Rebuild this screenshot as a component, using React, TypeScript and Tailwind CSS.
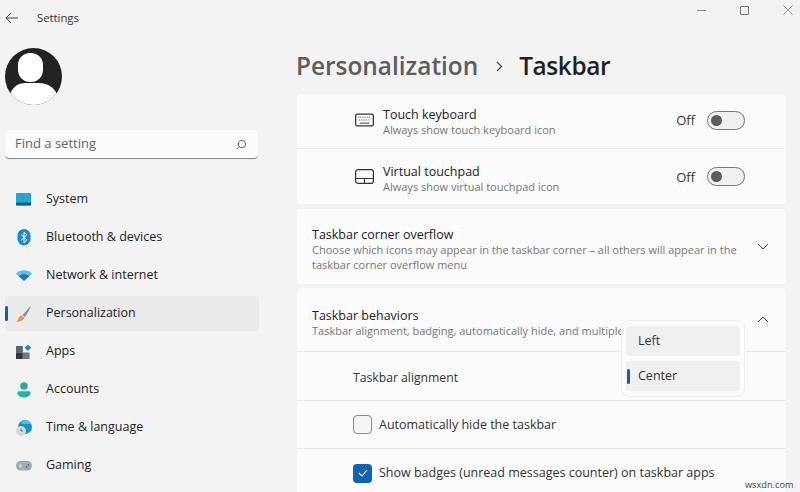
import { Search } from 'lucide-react';

const font = { fontFamily: '"Open Sans", "Noto Sans", sans-serif' };

function SystemIcon() {
  return (
    <svg width="15" height="13" viewBox="0 0 16 13" preserveAspectRatio="none">
      <rect width="16" height="12.5" rx="1" fill="#2aa5cf" />
      <rect y="9.5" width="16" height="3" rx="0.8" fill="#0b5f8a" />
    </svg>
  );
}

function BluetoothIcon() {
  return (
    <svg width="14" height="17" viewBox="0 0 14 17">
      <rect width="13" height="16.5" x="0.5" rx="6.5" fill="#1a86d9" />
      <path d="M4 5.5l6 5.5-3 2.8V3.2l3 2.8-6 5.5" fill="none" stroke="#fff" strokeWidth="1" />
    </svg>
  );
}

function WifiIcon() {
  return (
    <svg width="16" height="11" viewBox="0 0 16 11">
      <path d="M0 3.6C4.5-.8 11.5-.8 16 3.6L13.6 6C10.4 3.2 5.6 3.2 2.4 6z" fill="#5cc1ea" />
      <path d="M2.4 6C5.6 3.2 10.4 3.2 13.6 6L8 11z" fill="#0f7cc4" />
    </svg>
  );
}

function BrushIcon() {
  return (
    <svg width="15" height="16" viewBox="0 0 15 16">
      <path d="M14.5.2L6.5 9l2.4 2.2C11 8 13.4 4.2 14.8.5z" fill="#8a8f96" />
      <path d="M5.8 9.4l2.5 2.3C7.4 14.4 3.4 16 .3 15.7c2-1.1 1.8-2.6 2.5-4 .6-1.1 1.8-1.9 3-2.3z" fill="#e8933a" />
    </svg>
  );
}

function AppsIcon() {
  return (
    <svg width="15" height="14" viewBox="0 0 15 14">
      <rect x="0" y="1" width="6.8" height="6.5" fill="#5d6670" />
      <rect x="0" y="7.5" width="6.8" height="6.5" fill="#2f343a" />
      <rect x="7" y="7.5" width="6.5" height="6.5" fill="#6f7780" />
      <rect x="9.6" y="0.4" width="4.6" height="4.6" transform="rotate(45 11.9 2.7)" fill="#1a86d9" />
    </svg>
  );
}

function AccountsIcon() {
  return (
    <svg width="14" height="16" viewBox="0 0 14 16">
      <circle cx="7" cy="4" r="3.8" fill="#2aa89a" />
      <path d="M0.4 10.8c0-1 .8-1.6 1.8-1.6h9.6c1 0 1.8.6 1.8 1.6 0 3-3 4.7-6.6 4.7S.4 13.8.4 10.8z" fill="#22b5a4" />
    </svg>
  );
}

function TimeIcon() {
  return (
    <svg width="16" height="16" viewBox="0 0 16 16">
      <circle cx="9" cy="7" r="7" fill="#1c8fc9" />
      <path d="M9 0a7 7 0 0 1 6.5 4.4C12 3.5 9.5 4.5 6.5 4 5 3.7 4.3 2.6 4.6 1.6A7 7 0 0 1 9 0z" fill="#48c0e6" />
      <circle cx="5" cy="11" r="5" fill="#d5dade" />
      <path d="M5 8.6V11h2" fill="none" stroke="#555" strokeWidth="0.8" />
    </svg>
  );
}

function GamingIcon() {
  return (
    <svg width="16" height="10" viewBox="0 0 16 10">
      <rect width="16" height="9.5" rx="4.5" fill="#a4abb3" />
      <path d="M3 4.8h3M4.5 3.3v3" stroke="#fff" strokeWidth="0.9" />
      <circle cx="10.5" cy="6" r="0.9" fill="#2a6fb5" />
      <circle cx="12.4" cy="3.8" r="0.9" fill="#2a6fb5" />
    </svg>
  );
}

const navItems = [
  { label: 'System', icon: <SystemIcon /> },
  { label: 'Bluetooth & devices', icon: <BluetoothIcon /> },
  { label: 'Network & internet', icon: <WifiIcon /> },
  { label: 'Personalization', icon: <BrushIcon />, active: true },
  { label: 'Apps', icon: <AppsIcon /> },
  { label: 'Accounts', icon: <AccountsIcon /> },
  { label: 'Time & language', icon: <TimeIcon /> },
  { label: 'Gaming', icon: <GamingIcon /> },
];

function Toggle({ className = '' }: { className?: string }) {
  return (
    <div className={`flex items-center gap-[12px] ${className}`}>
      <span className="pt-[2px] text-[13px] text-[#333]">Off</span>
      <div className="flex h-[19px] w-[38px] items-center rounded-full border border-[#777] bg-[#f0f0f0] pl-[3px]">
        <div className="h-[11px] w-[11px] rounded-full bg-[#5c5c5c]" />
      </div>
    </div>
  );
}

function KeyboardIcon() {
  return (
    <svg width="19" height="14" viewBox="0 0 20 14" fill="none" className="-mt-[2px]">
      <rect x="0.7" y="0.7" width="18.6" height="12.6" rx="1.5" stroke="#333" strokeWidth="1.3" />
      <path d="M3.5 4h13M4.5 7h11" stroke="#444" strokeWidth="1.1" strokeDasharray="1 1.2" />
      <path d="M5 10.3h10" stroke="#444" strokeWidth="1.1" />
    </svg>
  );
}

function TouchpadIcon() {
  return (
    <svg width="19" height="15" viewBox="0 0 19 15" fill="none">
      <rect x="0.6" y="0.6" width="17.8" height="13.8" rx="2.5" stroke="#333" strokeWidth="1.2" />
      <path d="M0.6 9.5h17.8M9.5 9.5v5" stroke="#333" strokeWidth="1.2" />
    </svg>
  );
}

function Chevron({ up }: { up?: boolean }) {
  return (
    <svg width="12" height="7" viewBox="0 0 12 7" fill="none" className="shrink-0">
      <path d={up ? 'M1 6l5-5 5 5' : 'M1 1l5 5 5-5'} stroke="#444" strokeWidth="1" />
    </svg>
  );
}

export default function App() {
  return (
    <div className="relative flex h-[492px] w-[800px] overflow-hidden bg-[#f3f3f3]" style={font}>
      <aside className="flex w-[297px] shrink-0 flex-col">
        <div className="flex h-[36px] items-center pl-[5px]">
          <svg width="14" height="12" viewBox="0 0 14 12" fill="none">
            <path d="M13 6H1.2M6 1L1 6l5 5" stroke="#444" strokeWidth="1" />
          </svg>
          <span className="ml-[18px] text-[11.3px] text-[#333]">Settings</span>
        </div>
        <div className="mt-[12px] ml-[5px] h-[57px] w-[57px] overflow-hidden rounded-full bg-[#222]">
          <svg width="57" height="57" viewBox="0 0 57 57">
            <rect x="13" y="5" width="25" height="29" rx="12" fill="#fff" />
            <path d="M5 46C8 38 14 35 21 35h12c8 0 14 3 18 9v13H5z" fill="#fff" />
          </svg>
        </div>
        <div className="mt-[25px] ml-[5px] flex h-[29px] w-[253px] items-center justify-between rounded-[4px] border-b border-b-[#8a8a8a] bg-[#fbfbfb] pr-[11px] pl-[10px] shadow-[0_0_1px_rgba(0,0,0,0.15)]">
          <span className="text-[13px] text-[#666]">Find a setting</span>
          <Search size={11} strokeWidth={1.6} color="#333" className="-scale-x-100" />
        </div>
        <nav className="mt-[23px] ml-[5px] flex w-[254px] flex-col gap-[3px]">
          {navItems.map((item) => (
            <div
              key={item.label}
              className={`relative flex h-[35px] items-center rounded-[4px] ${item.active ? 'bg-[#eaeaea]' : ''}`}
            >
              {item.active && <div className="absolute left-0 h-[15px] w-[3px] rounded-full bg-[#155f9e]" />}
              <div className="flex w-[37px] justify-center">{item.icon}</div>
              <span className="ml-[4px] text-[12.5px] text-[#222]">{item.label}</span>
            </div>
          ))}
        </nav>
      </aside>

      <main className="flex min-w-0 flex-1 flex-col pr-[14px] *:shrink-0">
        <div className="-mr-[8px] flex h-[18px] items-center justify-end gap-[34px] pt-[2px] pr-[1px]">
          <div className="h-px w-[9px] bg-[#888]" />
          <div className="h-[9px] w-[9px] rounded-[1px] border border-[#777]" />
          <svg width="10" height="10" viewBox="0 0 10 10" fill="none">
            <path d="M.5.5l9 9M9.5.5l-9 9" stroke="#888" strokeWidth="0.9" />
          </svg>
        </div>
        <div className="-ml-[1px] flex h-[76px] items-center pt-[20px] text-[24.4px] font-semibold">
          <span className="text-[#5d5d5d]">Personalization</span>
          <svg width="7" height="11" viewBox="0 0 7 11" fill="none" className="mr-[16px] ml-[18px]">
            <path d="M1 1l4.5 4.5L1 10" stroke="#444" strokeWidth="1.3" />
          </svg>
          <span className="tracking-[-0.4px] text-[#1f1f1f]">Taskbar</span>
        </div>

        <section className="rounded-[4px] bg-[#fbfbfb]">
          <div className="flex h-[55px] items-center border-b border-[#ececec] pr-[41px] pl-[58px]">
            <div className="w-[28px] shrink-0">
              <KeyboardIcon />
            </div>
            <div className="flex-1 pt-[2px]">
              <div className="text-[12.5px] leading-[15px] text-[#222]">Touch keyboard</div>
              <div className="text-[11px] leading-[15px] text-[#777]">Always show touch keyboard icon</div>
            </div>
            <Toggle className="mb-[2px]" />
          </div>
          <div className="flex h-[55px] items-center pr-[41px] pl-[58px]">
            <div className="w-[28px] shrink-0">
              <TouchpadIcon />
            </div>
            <div className="flex-1 pt-[4px]">
              <div className="text-[12.5px] leading-[15px] text-[#222]">Virtual touchpad</div>
              <div className="text-[11px] leading-[15px] text-[#777]">Always show virtual touchpad icon</div>
            </div>
            <Toggle />
          </div>
        </section>

        <section className="mt-[5px] flex h-[75px] items-center justify-between rounded-[4px] bg-[#fbfbfb] pr-[17px] pl-[15px]">
          <div className="w-[440px] pt-[5px]">
            <div className="text-[12.5px] leading-[15px] text-[#222]">Taskbar corner overflow</div>
            <div className="text-[11px] leading-[15px] text-[#777]">
              Choose which icons may appear in the taskbar corner – all others will appear in the taskbar corner overflow menu
            </div>
          </div>
          <Chevron />
        </section>

        <section className="mt-[4px] rounded-[4px] bg-[#fbfbfb]">
          <div className="flex h-[64px] items-center justify-between border-b border-[#e6e6e6] pr-[17px] pl-[15px]">
            <div className="pt-[6px]">
              <div className="text-[12.5px] leading-[15px] text-[#222]">Taskbar behaviors</div>
              <div className="text-[11px] leading-[15px] whitespace-nowrap text-[#777]">
                Taskbar alignment, badging, automatically hide, and multiple
              </div>
            </div>
            <Chevron up />
          </div>
          <div className="flex h-[49px] items-center border-b border-[#e6e6e6] pt-[4px] pl-[56px] text-[12.2px] text-[#333]">
            Taskbar alignment
          </div>
          <div className="flex h-[48px] items-center gap-[7px] border-b border-[#e6e6e6] pl-[56px]">
            <div className="h-[19px] w-[19px] rounded-[4px] border border-[#8c8c8c] bg-[#f4f4f4]" />
            <span className="pt-[1px] text-[12.5px] text-[#333]">Automatically hide the taskbar</span>
          </div>
          <div className="flex h-[48px] items-center gap-[7px] pl-[56px]">
            <div className="flex h-[19px] w-[19px] items-center justify-center rounded-[4px] bg-[#0f62b4]">
              <svg width="10" height="8" viewBox="0 0 10 8" fill="none">
                <path d="M1 4l3 3 5-6" stroke="#fff" strokeWidth="1.1" />
              </svg>
            </div>
            <span className="pt-[1px] text-[12.5px] text-[#333]">Show badges (unread messages counter) on taskbar apps</span>
          </div>
        </section>
      </main>

      <div className="absolute top-[320px] left-[621px] flex h-[77px] w-[124px] flex-col gap-[5px] rounded-[8px] border border-[#efefef] bg-[#fbfbfb] px-[4px] py-[5px]">
        <div className="flex h-[30px] items-center rounded-[4px] bg-[#f0f0f0] pl-[12px] text-[12.5px] text-[#333]">Left</div>
        <div className="relative flex h-[30px] items-center rounded-[4px] bg-[#f0f0f0] pl-[12px] text-[12.5px] text-[#333]">
          <div className="absolute left-[1px] h-[15px] w-[3px] rounded-full bg-[#155f9e]" />
          Center
        </div>
      </div>

      <div className="absolute top-[478px] left-[745px] text-[9.2px] text-[#444]">wsxdn.com</div>
    </div>
  );
}
